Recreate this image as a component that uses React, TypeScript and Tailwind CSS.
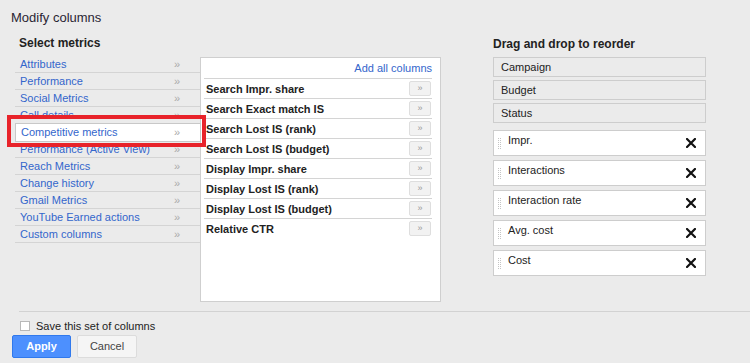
const CATEGORIES = [
  'Attributes',
  'Performance',
  'Social Metrics',
  'Call details',
  'Competitive metrics',
  'Performance (Active View)',
  'Reach Metrics',
  'Change history',
  'Gmail Metrics',
  'YouTube Earned actions',
  'Custom columns',
]

const METRICS = [
  'Search Impr. share',
  'Search Exact match IS',
  'Search Lost IS (rank)',
  'Search Lost IS (budget)',
  'Display Impr. share',
  'Display Lost IS (rank)',
  'Display Lost IS (budget)',
  'Relative CTR',
]

const FIXED = ['Campaign', 'Budget', 'Status']
const MOVABLE = ['Impr.', 'Interactions', 'Interaction rate', 'Avg. cost', 'Cost']

function Grip() {
  return (
    <svg width="3" height="11" viewBox="0 0 3 11" className="shrink-0">
      {[0, 2, 4, 6, 8, 10].map((y) => (
        <g key={y} fill="#c4c4c4">
          <rect x="0" y={y} width="1" height="1" />
          <rect x="2" y={y} width="1" height="1" />
        </g>
      ))}
    </svg>
  )
}

function Cross() {
  return (
    <svg width="10" height="10" viewBox="0 0 10 10">
      <path d="M1 1 L9 9 M9 1 L1 9" stroke="#111" strokeWidth="2.2" strokeLinecap="square" />
    </svg>
  )
}

export default function App() {
  const selected = 'Competitive metrics'

  return (
    <div
      className="relative w-[750px] h-[363px] bg-[#ebebeb] flex flex-col overflow-hidden text-[#222]"
      style={{ fontFamily: '"Liberation Sans", Arial, sans-serif' }}
    >
      {/* Title */}
      <div className="pl-[11px] pt-[10px] text-[13px] leading-[16px] text-[#2a2533]">Modify columns</div>

      {/* Columns */}
      <div className="flex mt-[10px] h-[275px]">
        {/* Categories */}
        <div className="ml-[15px] w-[185px] shrink-0">
          <div className="pl-[4px] h-[14px] mb-[6px] text-[12px] leading-[14px] font-bold">Select metrics</div>
          <ul>
            {CATEGORIES.map((c) =>
              c === selected ? (
                <li
                  key={c}
                  className="relative z-10 -my-px h-[19px] -mr-px flex items-center justify-between bg-white border border-[#c8c8c8] pl-[5px] pr-[20px] text-[11px] text-[#3366cc]"
                >
                  <span>{c}</span>
                  <span className="text-[#aaa] text-[11px]">»</span>
                </li>
              ) : (
                <li
                  key={c}
                  className="h-[17px] flex items-center justify-between border-b border-[#d4d4d4] pl-[5px] pr-[20px] text-[11px] leading-[16px] text-[#3366cc]"
                >
                  <span>{c}</span>
                  <span className="text-[#aaa] text-[11px]">»</span>
                </li>
              )
            )}
          </ul>
        </div>

        {/* Metrics */}
        <div className="w-[241px] h-[245px] mt-[21px] shrink-0 bg-white border border-[#cfcfcf] pl-[3px] pr-[8px]">
          <div className="h-[20px] flex items-center justify-end text-[11px] text-[#3366cc]">Add all columns</div>
          {METRICS.map((m) => (
            <div
              key={m}
              className="h-[20px] flex items-center justify-between border-t border-[#d4d4d4] pl-[2px] pr-[1px]"
            >
              <span className="text-[11px] font-bold leading-[14px] pt-[1px]">{m}</span>
              <span className="w-[22px] h-[15px] flex items-center justify-center bg-[#f2f2f2] border border-[#dedede] rounded-[2px] text-[9px] text-[#999]">
                »
              </span>
            </div>
          ))}
        </div>

        {/* Order */}
        <div className="ml-[52px] w-[213px] shrink-0 pt-[1px]">
          <div className="h-[14px] mb-[6px] text-[12px] leading-[14px] font-bold">Drag and drop to reorder</div>
          <div className="flex flex-col gap-[3px]">
            {FIXED.map((f) => (
              <div key={f} className="h-[20px] flex items-center pl-[7px] border border-[#cdcdcd] text-[11px]">
                {f}
              </div>
            ))}
          </div>
          <div className="mt-[7px] flex flex-col gap-[4px]">
            {MOVABLE.map((f) => (
              <div key={f} className="h-[26px] flex items-start bg-white border border-[#cdcdcd] pl-[4px] pr-[9px]">
                <div className="pt-[7px]">
                  <Grip />
                </div>
                <span className="ml-[7px] pt-[2px] text-[11px] leading-[14px] flex-1">{f}</span>
                <div className="self-center">
                  <Cross />
                </div>
              </div>
            ))}
          </div>
        </div>
      </div>

      {/* Footer */}
      <div className="ml-[19px] border-t border-[#d2d2d2]" />
      <div className="mt-[7px] h-[14px] flex items-center pl-[20px] gap-[6px] text-[11px]">
        <span className="w-[10px] h-[10px] bg-white border border-[#b8b8b8]" />
        <span>Save this set of columns</span>
      </div>
      <div className="mt-[2px] pl-[12px] flex gap-[6px]">
        <button className="w-[59px] h-[23px] bg-[#4d90fe] border border-[#3079ed] rounded-[2px] text-white text-[11px] font-bold">
          Apply
        </button>
        <button className="w-[60px] h-[23px] bg-[#f5f5f5] border border-[#dcdcdc] rounded-[2px] text-[#444] text-[11px]">
          Cancel
        </button>
      </div>

      {/* Highlight annotation */}
      <div className="absolute left-[7px] top-[115px] w-[199px] h-[32px] border-[4px] border-[#e8232a] pointer-events-none" />
    </div>
  )
}
